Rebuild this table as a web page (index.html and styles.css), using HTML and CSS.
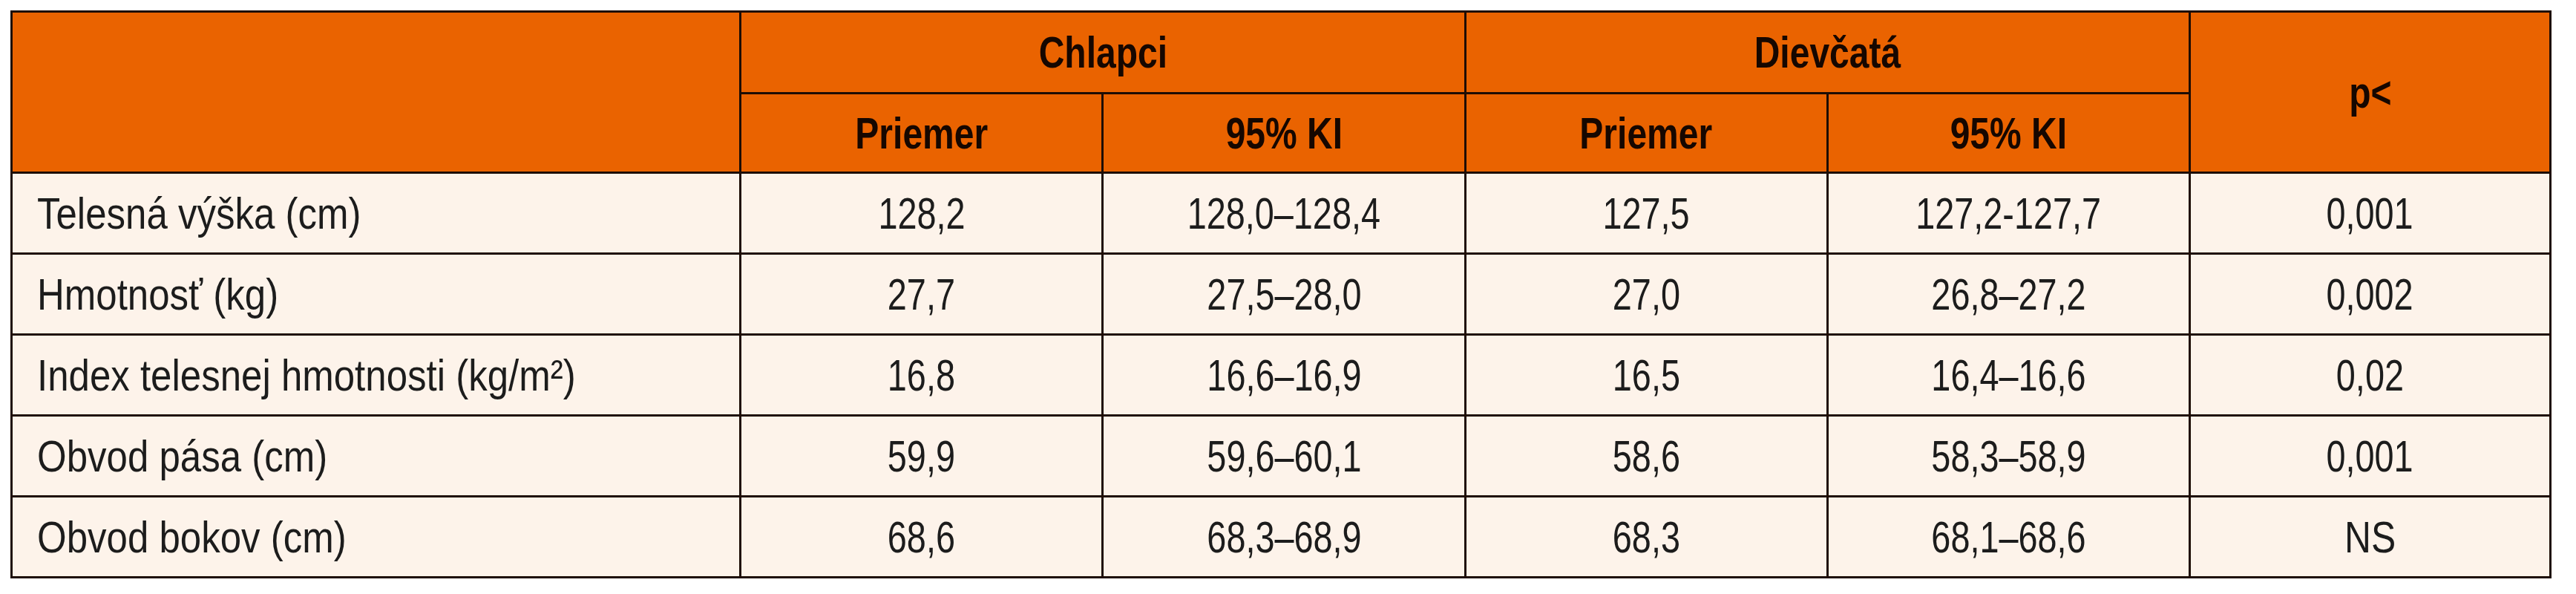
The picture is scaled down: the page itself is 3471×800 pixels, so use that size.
FILE: index.html
```html
<!DOCTYPE html>
<html lang="sk">
<head>
<meta charset="utf-8">
<title>Tabuľka</title>
<link rel="stylesheet" href="styles.css">
</head>
<body>
<div class="wrap">
<table class="data">
  <colgroup>
    <col class="c-label">
    <col class="c-val">
    <col class="c-val">
    <col class="c-val">
    <col class="c-val">
    <col class="c-p">
  </colgroup>
  <thead>
    <tr class="h1">
      <th rowspan="2"></th>
      <th colspan="2"><span class="t">Chlapci</span></th>
      <th colspan="2"><span class="t">Dievčatá</span></th>
      <th rowspan="2"><span class="t">p&lt;</span></th>
    </tr>
    <tr class="h2">
      <th><span class="t">Priemer</span></th>
      <th><span class="t">95% KI</span></th>
      <th><span class="t">Priemer</span></th>
      <th><span class="t">95% KI</span></th>
    </tr>
  </thead>
  <tbody>
    <tr>
      <td class="label"><span class="t">Telesná výška (cm)</span></td>
      <td><span class="t n">128,2</span></td>
      <td><span class="t n">128,0–128,4</span></td>
      <td><span class="t n">127,5</span></td>
      <td><span class="t n">127,2-127,7</span></td>
      <td><span class="t n">0,001</span></td>
    </tr>
    <tr>
      <td class="label"><span class="t">Hmotnosť (kg)</span></td>
      <td><span class="t n">27,7</span></td>
      <td><span class="t n">27,5–28,0</span></td>
      <td><span class="t n">27,0</span></td>
      <td><span class="t n">26,8–27,2</span></td>
      <td><span class="t n">0,002</span></td>
    </tr>
    <tr>
      <td class="label"><span class="t">Index telesnej hmotnosti (kg/m²)</span></td>
      <td><span class="t n">16,8</span></td>
      <td><span class="t n">16,6–16,9</span></td>
      <td><span class="t n">16,5</span></td>
      <td><span class="t n">16,4–16,6</span></td>
      <td><span class="t n">0,02</span></td>
    </tr>
    <tr>
      <td class="label"><span class="t">Obvod pása (cm)</span></td>
      <td><span class="t n">59,9</span></td>
      <td><span class="t n">59,6–60,1</span></td>
      <td><span class="t n">58,6</span></td>
      <td><span class="t n">58,3–58,9</span></td>
      <td><span class="t n">0,001</span></td>
    </tr>
    <tr>
      <td class="label"><span class="t">Obvod bokov (cm)</span></td>
      <td><span class="t n">68,6</span></td>
      <td><span class="t n">68,3–68,9</span></td>
      <td><span class="t n">68,3</span></td>
      <td><span class="t n">68,1–68,6</span></td>
      <td><span class="t">NS</span></td>
    </tr>
  </tbody>
</table>
</div>
</body>
</html>
```

FILE: styles.css
```css
html, body {
  margin: 0;
  padding: 0;
  background: #ffffff;
}

.wrap {
  padding: 14px 0 0 14px;
}

.data {
  border-collapse: collapse;
  table-layout: fixed;
  width: 3424px;
  font-family: "Liberation Sans", Arial, sans-serif;
  font-size: 60px;
  line-height: 1.15;
  color: #1c1c1c;
  border: 3px solid #1e0d05;
}

.c-label { width: 982px; }
.c-val { width: 488px; }
.c-p { width: 486px; }

.data th,
.data td {
  border: 3px solid #1e0d05;
  padding: 0 10px;
  text-align: center;
  vertical-align: middle;
  white-space: nowrap;
  overflow: hidden;
}

.t {
  display: inline-block;
  transform: scaleX(0.83);
  transform-origin: center center;
}

.t.n {
  transform: scaleX(0.78);
}

.data thead th {
  background: #ea6300;
  color: #160700;
  font-weight: bold;
}

.data thead .t {
  transform: scaleX(0.8);
}

.data tr.h1 { height: 110px; }
.data tr.h2 { height: 107px; }

.data tbody tr { height: 109px; }

.data tbody td {
  background: #fdf3ea;
  font-weight: normal;
}

.data td.label {
  text-align: left;
  padding-left: 33px;
}

.data td.label .t {
  transform-origin: left center;
  transform: scaleX(0.85);
}
```
